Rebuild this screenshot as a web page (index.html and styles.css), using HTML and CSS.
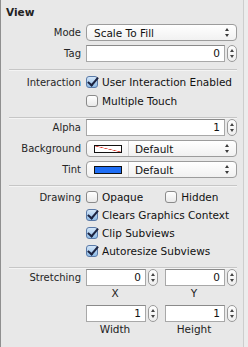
FILE: index.html
```
<!DOCTYPE html>
<html lang="en">

<head>
    <meta charset="UTF-8">
    <title>View Inspector</title>
    <link rel="stylesheet" href="styles.css">
</head>

<body>
    <div class="inspector">
        <div class="title">View</div>

        <div class="group">
            <div class="row">
                <span class="label">Mode</span>
                <div class="popup"><span class="popup-text">Scale To Fill</span><span class="arrows"></span></div>
            </div>
            <div class="row">
                <span class="label">Tag</span>
                <div class="num"><div class="field wide">0</div><span class="stepper"></span></div>
            </div>
        </div>

        <div class="sep"></div>

        <div class="group checks">
            <div class="row">
                <span class="label">Interaction</span>
                <label class="check on"><span class="box"></span>User Interaction Enabled</label>
            </div>
            <div class="row">
                <span class="label"></span>
                <label class="check"><span class="box"></span>Multiple Touch</label>
            </div>
        </div>

        <div class="sep"></div>

        <div class="group">
            <div class="row">
                <span class="label">Alpha</span>
                <div class="num"><div class="field wide">1</div><span class="stepper"></span></div>
            </div>
            <div class="row">
                <span class="label">Background</span>
                <div class="popup color">
                    <span class="swatch clear"></span><span class="divider"></span>
                    <span class="popup-text">Default</span><span class="arrows"></span>
                </div>
            </div>
            <div class="row">
                <span class="label">Tint</span>
                <div class="popup color">
                    <span class="swatch blue"></span><span class="divider"></span>
                    <span class="popup-text">Default</span><span class="arrows"></span>
                </div>
            </div>
        </div>

        <div class="sep"></div>

        <div class="group checks drawing">
            <div class="row">
                <span class="label">Drawing</span>
                <div class="pair">
                    <label class="check"><span class="box"></span>Opaque</label>
                    <label class="check"><span class="box"></span>Hidden</label>
                </div>
            </div>
            <div class="row">
                <span class="label"></span>
                <label class="check on"><span class="box"></span>Clears Graphics Context</label>
            </div>
            <div class="row">
                <span class="label"></span>
                <label class="check on"><span class="box"></span>Clip Subviews</label>
            </div>
            <div class="row">
                <span class="label"></span>
                <label class="check on"><span class="box"></span>Autoresize Subviews</label>
            </div>
        </div>

        <div class="sep"></div>

        <div class="group stretch">
            <div class="row">
                <span class="label">Stretching</span>
                <div class="pair">
                    <div class="cell">
                        <div class="num"><div class="field">0</div><span class="stepper"></span></div>
                        <span class="caption">X</span>
                    </div>
                    <div class="cell">
                        <div class="num"><div class="field">0</div><span class="stepper"></span></div>
                        <span class="caption">Y</span>
                    </div>
                </div>
            </div>
            <div class="row">
                <span class="label"></span>
                <div class="pair">
                    <div class="cell">
                        <div class="num"><div class="field">1</div><span class="stepper"></span></div>
                        <span class="caption">Width</span>
                    </div>
                    <div class="cell">
                        <div class="num"><div class="field">1</div><span class="stepper"></span></div>
                        <span class="caption">Height</span>
                    </div>
                </div>
            </div>
        </div>
    </div>
</body>

</html>
```

FILE: styles.css
```
* {
    margin: 0;
    padding: 0;
    box-sizing: border-box;
}

body {
    background-color: #ececec;
    font-family: "DejaVu Sans", "Liberation Sans", sans-serif;
    font-size: 10px;
    color: #1a1a1a;
}

.inspector {
    width: 244px;
    height: 347px;
    background-color: #e8e8e8;
    border-left: 1px solid #8f8f8f;
    border-right: 1px solid #cdcdcd;
}

.title {
    height: 24px;
    padding: 6px 0 0 5px;
    font-weight: bold;
    font-size: 10.5px;
    color: #222;
}

.group {
    display: flex;
    flex-direction: column;
    gap: 4px;
}

.row {
    display: grid;
    grid-template-columns: 80px 151px;
    column-gap: 5px;
    align-items: center;
}

.label {
    text-align: right;
    color: #262626;
}

/* separators */
.sep {
    margin: 7px 6px 0 8px;
    height: 2px;
    border-top: 1px solid #c6c6c6;
    border-bottom: 1px solid #f4f4f4;
}

/* popup buttons */
.popup {
    height: 17px;
    border: 1px solid #9c9c9c;
    border-radius: 4px;
    background: linear-gradient(#ffffff, #f1f1f1);
    display: flex;
    align-items: center;
    padding-left: 7px;
}

.popup-text {
    flex: 1;
    font-size: 10.5px;
    color: #111;
}

.arrows {
    width: 5px;
    height: 9px;
    margin-right: 6px;
    position: relative;
}

.arrows::before,
.arrows::after {
    content: "";
    position: absolute;
    left: 0;
    border-left: 2.5px solid transparent;
    border-right: 2.5px solid transparent;
}

.arrows::before {
    top: 0;
    border-bottom: 3px solid #3a3a3a;
}

.arrows::after {
    bottom: 0;
    border-top: 3px solid #3a3a3a;
}

.swatch {
    width: 28px;
    height: 8px;
    border: 1px solid #111;
}

.swatch.clear {
    background: linear-gradient(to top right, #fff calc(50% - 0.6px), #e03a2e 50%, #fff calc(50% + 0.6px));
}

.swatch.blue {
    background-color: #1f6ef5;
}

.divider {
    width: 1px;
    height: 15px;
    background-color: #d2d2d2;
    margin: 0 6px;
}

/* numeric fields */
.num {
    display: flex;
    align-items: center;
    gap: 2px;
}

.field {
    height: 17px;
    width: 60px;
    background-color: #fff;
    border: 1px solid #a8a8a8;
    border-top-color: #8a8a8a;
    text-align: right;
    padding-right: 4px;
    line-height: 15px;
    font-size: 10.5px;
    color: #111;
}

.field.wide {
    width: 139px;
}

.stepper {
    width: 10px;
    height: 17px;
    border: 1px solid #9a9a9a;
    border-radius: 5px;
    background: linear-gradient(#fdfdfd, #eeeeee);
    position: relative;
}

.stepper::before,
.stepper::after {
    content: "";
    position: absolute;
    left: 2px;
    border-left: 2px solid transparent;
    border-right: 2px solid transparent;
}

.stepper::before {
    top: 3px;
    border-bottom: 3px solid #444;
}

.stepper::after {
    bottom: 3px;
    border-top: 3px solid #444;
}

/* checkboxes */
.checks {
    gap: 1px;
    margin-top: 2px;
    margin-bottom: 1px;
}

.checks .row {
    height: 18px;
}

.drawing {
    gap: 0;
    margin-top: 1px;
    margin-bottom: 0;
}

.check {
    display: flex;
    align-items: center;
    gap: 4px;
    font-size: 10.5px;
    color: #111;
    white-space: nowrap;
}

.box {
    width: 12px;
    height: 12px;
    border: 1px solid #8a8a8a;
    border-radius: 3px;
    background: linear-gradient(#ffffff, #e9e9e9);
    position: relative;
}

.check.on .box {
    border-color: #5a7aa8;
    background: linear-gradient(#d4e6f8, #8fbbe6);
}

.check.on .box::after {
    content: "";
    position: absolute;
    left: 3px;
    top: -2px;
    width: 4px;
    height: 9px;
    border-right: 2px solid #1c2340;
    border-bottom: 2px solid #1c2340;
    transform: rotate(40deg);
}

.pair {
    display: flex;
    gap: 22px;
}

/* stretching */
.stretch {
    margin-top: 0;
    gap: 5px;
}

.stretch .row {
    align-items: start;
}

.stretch .pair {
    gap: 7px;
}

.cell {
    display: flex;
    flex-direction: column;
    width: 72px;
}

.caption {
    text-align: center;
    padding-right: 14px;
    font-size: 10.5px;
    color: #222;
    line-height: 14px;
}

.stretch .label {
    line-height: 17px;
}
```
